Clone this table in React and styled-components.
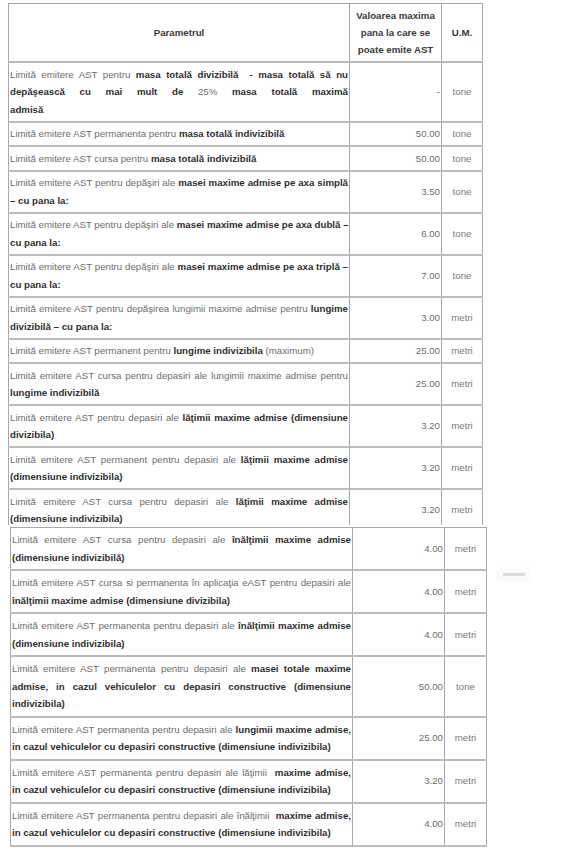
import React from "react";
import styled, { createGlobalStyle } from "styled-components";

const GlobalStyle = createGlobalStyle`
  html, body {
    margin: 0;
    padding: 0;
    background: #ffffff;
  }
  body {
    font-family: "Liberation Sans", Arial, sans-serif;
  }
`;

const Page = styled.div`
  width: 587px;
  height: 850px;
  overflow: hidden;
  padding: 3px 0 0 8px;
  box-sizing: border-box;
`;

const TopClip = styled.div`
  width: 476px;
  height: 522px;
  overflow: hidden;
`;

const LowerRow = styled.div`
  display: flex;
  align-items: flex-start;
  margin: 2px 0 0 2px;
`;

const Table = styled.table`
  width: ${(p) => p.$width}px;
  table-layout: fixed;
  border-collapse: collapse;
  font-size: 9.7px;
  color: #6a6a6a;
  border: 1px solid #a9a9a9;
`;

const Th = styled.th`
  border-left: 1px solid #a9a9a9;
  border-right: 1px solid #a9a9a9;
  border-bottom: 2px solid #b8b8b8;
  padding: 3px 1px;
  line-height: 17px;
  font-weight: bold;
  color: #3a3a3a;
  text-align: center;
  vertical-align: middle;
`;

const Td = styled.td`
  border-left: 1px solid #a9a9a9;
  border-right: 1px solid #a9a9a9;
  border-bottom: 2px solid #bdbdbd;
  padding: ${(p) => (p.$loose ? "3px" : "2.5px")} 1px;
  line-height: 17.5px;
  vertical-align: middle;
  text-align: ${(p) => p.$align || "left"};
  color: ${(p) => (p.$dim ? "#7a7a7a" : "#6e6e6e")};
`;

const Line = styled.span`
  display: block;
  white-space: nowrap;
  text-align: ${(p) => (p.$full ? "justify" : "left")};
  text-align-last: ${(p) => (p.$full ? "justify" : "auto")};
`;

const B = styled.b`
  color: #2f2f2f;
  font-weight: bold;
`;

const Dash = styled.div`
  margin: 40px 0 0 10px;
  padding: 6px 6px;
  background: #fbfbfb;
  span {
    display: block;
    width: 22px;
    height: 3px;
    border-radius: 1px;
    background: #d9d9d9;
  }
`;

const topRows = [
  {
    lines: [
      <>Limită emitere AST pentru <B>masa totală divizibilă&nbsp; - masa totală să nu</B></>,
      <><B>depăşească cu mai mult de</B> 25% <B>masa totală maximă</B></>,
      <><B>admisă</B></>,
    ],
    value: "-",
    unit: "tone",
  },
  {
    lines: [<>Limită emitere AST permanenta pentru <B>masa totală indivizibilă</B></>],
    value: "50.00",
    unit: "tone",
  },
  {
    lines: [<>Limită emitere AST cursa pentru <B>masa totală indivizibilă</B></>],
    value: "50.00",
    unit: "tone",
  },
  {
    lines: [
      <>Limită emitere AST pentru depăşiri ale <B>masei maxime admise pe axa simplă</B></>,
      <><B>– cu pana la:</B></>,
    ],
    value: "3.50",
    unit: "tone",
  },
  {
    lines: [
      <>Limită emitere AST pentru depăşiri ale <B>masei maxime admise pe axa dublă –</B></>,
      <><B>cu pana la:</B></>,
    ],
    value: "6.00",
    unit: "tone",
  },
  {
    lines: [
      <>Limită emitere AST pentru depăşiri ale <B>masei maxime admise pe axa triplă –</B></>,
      <><B>cu pana la:</B></>,
    ],
    value: "7.00",
    unit: "tone",
  },
  {
    lines: [
      <>Limită emitere AST pentru depăşirea lungimii maxime admise pentru <B>lungime</B></>,
      <><B>divizibilă – cu pana la:</B></>,
    ],
    value: "3.00",
    unit: "metri",
  },
  {
    lines: [<>Limită emitere AST permanent pentru <B>lungime indivizibila</B> (maximum)</>],
    value: "25.00",
    unit: "metri",
  },
  {
    lines: [
      <>Limită emitere AST cursa pentru depasiri ale lungimii maxime admise pentru</>,
      <><B>lungime indivizibilă</B></>,
    ],
    value: "25.00",
    unit: "metri",
  },
  {
    lines: [
      <>Limită emitere AST pentru depasiri ale <B>lăţimii maxime admise (dimensiune</B></>,
      <><B>divizibila)</B></>,
    ],
    value: "3.20",
    unit: "metri",
  },
  {
    lines: [
      <>Limită emitere AST permanent pentru depasiri ale <B>lăţimii maxime admise</B></>,
      <><B>(dimensiune indivizibila)</B></>,
    ],
    value: "3.20",
    unit: "metri",
  },
  {
    lines: [
      <>Limită emitere AST cursa pentru depasiri ale <B>lăţimii maxime admise</B></>,
      <><B>(dimensiune indivizibila)</B></>,
    ],
    value: "3.20",
    unit: "metri",
  },
];

const lowerRows = [
  {
    lines: [
      <>Limită emitere AST cursa pentru depasiri ale <B>înălţimii maxime admise</B></>,
      <><B>(dimensiune indivizibilă)</B></>,
    ],
    value: "4.00",
    unit: "metri",
  },
  {
    lines: [
      <>Limită emitere AST cursa si permanenta în aplicaţia eAST pentru depasiri ale</>,
      <><B>înălţimii maxime admise (dimensiune divizibila)</B></>,
    ],
    value: "4.00",
    unit: "metri",
  },
  {
    lines: [
      <>Limită emitere AST permanenta pentru depasiri ale <B>înălţimii maxime admise</B></>,
      <><B>(dimensiune indivizibila)</B></>,
    ],
    value: "4.00",
    unit: "metri",
  },
  {
    lines: [
      <>Limită emitere AST permanenta pentru depasiri ale <B>masei totale maxime</B></>,
      <><B>admise, in cazul vehiculelor cu depasiri constructive (dimensiune</B></>,
      <><B>indivizibila)</B></>,
    ],
    value: "50.00",
    unit: "tone",
  },
  {
    lines: [
      <>Limită emitere AST permanenta pentru depasiri ale <B>lungimii maxime admise,</B></>,
      <><B>in cazul vehiculelor cu depasiri constructive (dimensiune indivizibila)</B></>,
    ],
    value: "25.00",
    unit: "metri",
  },
  {
    lines: [
      <>Limită emitere AST permanenta pentru depasiri ale lăţimii&nbsp; <B>maxime admise,</B></>,
      <><B>in cazul vehiculelor cu depasiri constructive (dimensiune indivizibila)</B></>,
    ],
    value: "3.20",
    unit: "metri",
  },
  {
    lines: [
      <>Limită emitere AST permanenta pentru depasiri ale înălţimii&nbsp; <B>maxime admise,</B></>,
      <><B>in cazul vehiculelor cu depasiri constructive (dimensiune indivizibila)</B></>,
    ],
    value: "4.00",
    unit: "metri",
  },
];

function Rows({ rows, loose }) {
  return rows.map((row, i) => (
    <tr key={i}>
      <Td $loose={loose}>
        {row.lines.map((line, j) => (
          <Line key={j} $full={j < row.lines.length - 1}>
            {line}
          </Line>
        ))}
      </Td>
      <Td $loose={loose} $align="right">
        {row.value}
      </Td>
      <Td $loose={loose} $align="center" $dim>
        {row.unit}
      </Td>
    </tr>
  ));
}

export default function App() {
  return (
    <>
      <GlobalStyle />
      <Page>
        <TopClip>
          <Table $width={474}>
            <colgroup>
              <col style={{ width: 341 }} />
              <col style={{ width: 92 }} />
              <col style={{ width: 41 }} />
            </colgroup>
            <thead>
              <tr>
                <Th>Parametrul</Th>
                <Th>
                  Valoarea maxima
                  <br />
                  pana la care se
                  <br />
                  poate emite AST
                </Th>
                <Th>U.M.</Th>
              </tr>
            </thead>
            <tbody>
              <Rows rows={topRows} />
            </tbody>
          </Table>
        </TopClip>
        <LowerRow>
          <Table $width={476}>
            <colgroup>
              <col style={{ width: 342 }} />
              <col style={{ width: 92 }} />
              <col style={{ width: 42 }} />
            </colgroup>
            <tbody>
              <Rows rows={lowerRows} loose />
            </tbody>
          </Table>
          <Dash>
            <span />
          </Dash>
        </LowerRow>
      </Page>
    </>
  );
}
